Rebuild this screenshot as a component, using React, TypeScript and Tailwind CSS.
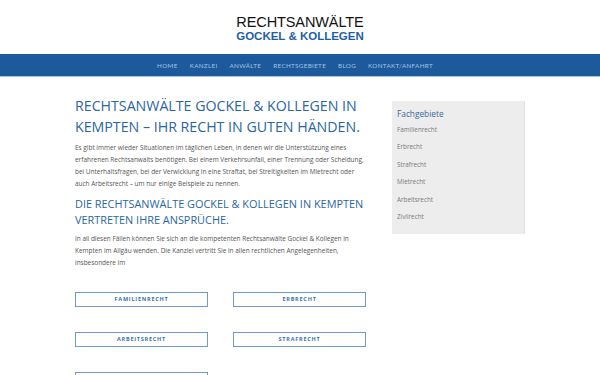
import React from "react";

const nav = ["HOME", "KANZLEI", "ANWÄLTE", "RECHTSGEBIETE", "BLOG", "KONTAKT/ANFAHRT"];
const side = ["Familienrecht", "Erbrecht", "Strafrecht", "Mietrecht", "Arbeitsrecht", "Zivilrecht"];
const buttons = ["FAMILIENRECHT", "ERBRECHT", "ARBEITSRECHT", "STRAFRECHT", "MIETRECHT"];

export default function App() {
  return (
    <div className="w-[600px] h-[375px] overflow-hidden bg-white" style={{ fontFamily: "'Open Sans', sans-serif" }}>
      <header className="h-[54px] flex flex-col items-center pt-[15px]" style={{ fontFamily: "'Liberation Sans', Arial, sans-serif" }}>
        <div className="text-[14.5px] leading-[14.5px] text-[#111] tracking-[-0.1px]">RECHTSANWÄLTE</div>
        <div className="mt-[1px] text-[11.5px] leading-[11.5px] font-bold text-[#1f5ea6]">GOCKEL &amp; KOLLEGEN</div>
      </header>
      <nav className="h-[23px] bg-[#1d5a9b] border-b border-[#a9c3e3] flex items-center justify-center gap-[12px] pt-[2px] pr-[10px]" style={{ fontFamily: "Lato, sans-serif" }}>
        {nav.map((n) => (
          <span key={n} className="text-[6.3px] tracking-[0.05em] text-[#a3c2e6]">{n}</span>
        ))}
      </nav>
      <main className="w-[450px] mx-auto flex gap-[26px] pt-[18px]">
        <div className="w-[291px] shrink-0">
          <h1 className="text-[14.2px] leading-[21px] text-[#2a66a0] font-normal">
            RECHTSANWÄLTE GOCKEL &amp; KOLLEGEN IN KEMPTEN – IHR RECHT IN GUTEN HÄNDEN.
          </h1>
          <p className="mt-[5px] text-[6.45px] leading-[12px] text-[#555]">
            Es gibt immer wieder Situationen im täglichen Leben, in denen wir die Unterstützung eines erfahrenen Rechtsanwalts benötigen. Bei einem Verkehrsunfall, einer Trennung oder Scheidung, bei Unterhaltsfragen, bei der Verwicklung in eine Straftat, bei Streitigkeiten im Mietrecht oder auch Arbeitsrecht – um nur einige Beispiele zu nennen.
          </p>
          <h2 className="mt-[6px] text-[10.9px] leading-[16px] text-[#2a66a0] font-normal">
            DIE RECHTSANWÄLTE GOCKEL &amp; KOLLEGEN IN KEMPTEN VERTRETEN IHRE ANSPRÜCHE.
          </h2>
          <p className="mt-[5px] text-[6.45px] leading-[12px] text-[#555]">
            In all diesen Fällen können Sie sich an die kompetenten Rechtsanwälte Gockel &amp; Kollegen in Kempten im Allgäu wenden. Die Kanzlei vertritt Sie in allen rechtlichen Angelegenheiten, insbesondere im
          </p>
          <div className="mt-[23px] grid grid-cols-[133px_133px] gap-x-[25px] gap-y-[25px]">
            {buttons.map((b) => (
              <div key={b} className="h-[15px] border-[1.5px] border-[#6b9ccd] flex items-center justify-center text-[5.5px] font-bold tracking-[0.14em] text-[#3b73ab]">
                {b}
              </div>
            ))}
          </div>
        </div>
        <aside className="w-[133px] h-[133px] mt-[6px] bg-[#ededed] border-r border-[#e0e0e0] pl-[5px] pt-[4.5px]">
          <div className="text-[8.3px] leading-[15px] text-[#33699f]">Fachgebiete</div>
          {side.map((s) => (
            <div key={s} className="text-[6.3px] leading-[17.6px] text-[#7a7a7a]">{s}</div>
          ))}
        </aside>
      </main>
    </div>
  );
}
